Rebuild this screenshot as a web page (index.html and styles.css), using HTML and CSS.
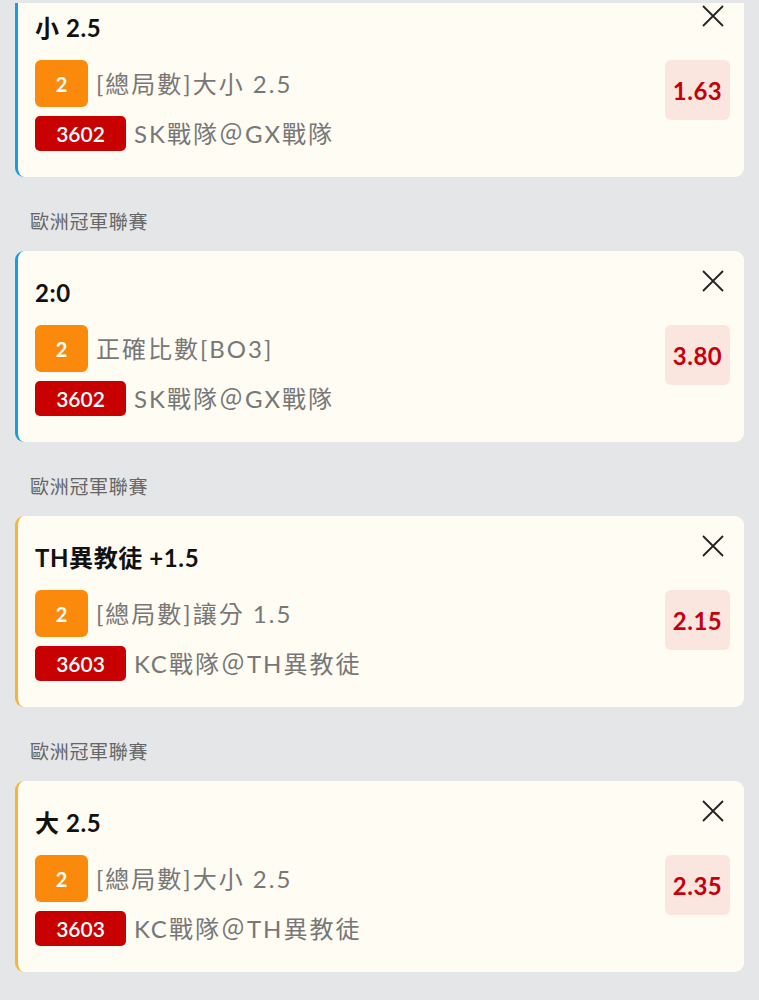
FILE: index.html
```html
<!DOCTYPE html>
<html lang="zh-Hant">
<head>
<meta charset="utf-8">
<title>注單</title>
<link rel="stylesheet" href="styles.css">
</head>
<body>
<div class="list">
  <div class="card card-blue first">
    <div class="card-head">
      <div class="title">小 2.5</div>
      <button class="close" aria-label="close"><svg viewBox="0 0 24 24" width="24" height="24"><path d="M2 2 L22 22 M22 2 L2 22" stroke="#222" stroke-width="1.8" fill="none"/></svg></button>
    </div>
    <div class="card-body">
      <div class="info">
        <div class="row"><span class="badge-o">2</span><span class="txt">[總局數]大小 2.5</span></div>
        <div class="row row2"><span class="badge-r">3602</span><span class="txt">SK戰隊＠GX戰隊</span></div>
      </div>
      <div class="odds">1.63</div>
    </div>
  </div>

  <div class="league">歐洲冠軍聯賽</div>
  <div class="card card-blue">
    <div class="card-head">
      <div class="title">2:0</div>
      <button class="close" aria-label="close"><svg viewBox="0 0 24 24" width="24" height="24"><path d="M2 2 L22 22 M22 2 L2 22" stroke="#222" stroke-width="1.8" fill="none"/></svg></button>
    </div>
    <div class="card-body">
      <div class="info">
        <div class="row"><span class="badge-o">2</span><span class="txt">正確比數[BO3]</span></div>
        <div class="row row2"><span class="badge-r">3602</span><span class="txt">SK戰隊＠GX戰隊</span></div>
      </div>
      <div class="odds">3.80</div>
    </div>
  </div>

  <div class="league">歐洲冠軍聯賽</div>
  <div class="card card-orange">
    <div class="card-head">
      <div class="title">TH異教徒 +1.5</div>
      <button class="close" aria-label="close"><svg viewBox="0 0 24 24" width="24" height="24"><path d="M2 2 L22 22 M22 2 L2 22" stroke="#222" stroke-width="1.8" fill="none"/></svg></button>
    </div>
    <div class="card-body">
      <div class="info">
        <div class="row"><span class="badge-o">2</span><span class="txt">[總局數]讓分 1.5</span></div>
        <div class="row row2"><span class="badge-r">3603</span><span class="txt">KC戰隊＠TH異教徒</span></div>
      </div>
      <div class="odds">2.15</div>
    </div>
  </div>

  <div class="league">歐洲冠軍聯賽</div>
  <div class="card card-orange">
    <div class="card-head">
      <div class="title">大 2.5</div>
      <button class="close" aria-label="close"><svg viewBox="0 0 24 24" width="24" height="24"><path d="M2 2 L22 22 M22 2 L2 22" stroke="#222" stroke-width="1.8" fill="none"/></svg></button>
    </div>
    <div class="card-body">
      <div class="info">
        <div class="row"><span class="badge-o">2</span><span class="txt">[總局數]大小 2.5</span></div>
        <div class="row row2"><span class="badge-r">3603</span><span class="txt">KC戰隊＠TH異教徒</span></div>
      </div>
      <div class="odds">2.35</div>
    </div>
  </div>
</div>
</body>
</html>
```

FILE: styles.css
```css
* { box-sizing: border-box; }
html, body { margin: 0; padding: 0; }
body {
  background: #e5e6e8;
  font-family: "Lato", "Noto Sans CJK TC", sans-serif;
  width: 759px;
  height: 1000px;
  overflow: hidden;
}
.list {
  margin-top: 3px;
  padding: 0 15px;
  overflow: hidden;
  height: 997px;
}
.card {
  background: #fffcf3;
  border-radius: 9px;
  border-left: 3px solid #1a9ce0;
  padding: 18px 14px 26px 17px;
  height: 191px;
}
.card-blue { border-left-color: #1a9ce0; }
.card-orange { border-left-color: #f9b23a; }
.card.first { margin-top: -17px; }
.card-head {
  display: flex;
  justify-content: space-between;
  align-items: flex-start;
}
.title {
  margin-top: 8px;
  font-size: 24px;
  line-height: 32px;
  font-weight: 700;
  letter-spacing: 0.6px;
  color: #111;
}
.close {
  width: 24px;
  height: 24px;
  padding: 0;
  margin: 0 5px 0 0;
  border: none;
  background: none;
  display: flex;
}
.card-body {
  display: flex;
  justify-content: space-between;
  align-items: flex-start;
  margin-top: 16px;
}
.info { display: flex; flex-direction: column; }
.row {
  display: flex;
  align-items: center;
  gap: 8px;
}
.row2 { margin-top: 9px; }
.badge-o {
  width: 53px;
  height: 47px;
  border-radius: 6px;
  background: #fb8a0c;
  color: #fff;
  font-size: 20px;
  font-weight: 700;
  display: flex;
  align-items: center;
  justify-content: center;
}
.badge-r {
  width: 91px;
  height: 35px;
  border-radius: 5px;
  background: #c90000;
  color: #fff;
  font-size: 21px;
  font-weight: 600;
  display: flex;
  align-items: center;
  justify-content: center;
}
.txt {
  font-size: 24px;
  line-height: 32px;
  letter-spacing: 2px;
  color: #777;
}
.odds {
  width: 65px;
  height: 60px;
  border-radius: 6px;
  background: #fbe5df;
  color: #c6000b;
  font-size: 24px;
  font-weight: 700;
  letter-spacing: 0.5px;
  display: flex;
  align-items: center;
  justify-content: center;
}
.league {
  padding: 32px 0 16px 15px;
  font-size: 19px;
  line-height: 26px;
  letter-spacing: 0.7px;
  color: #666;
}
```
